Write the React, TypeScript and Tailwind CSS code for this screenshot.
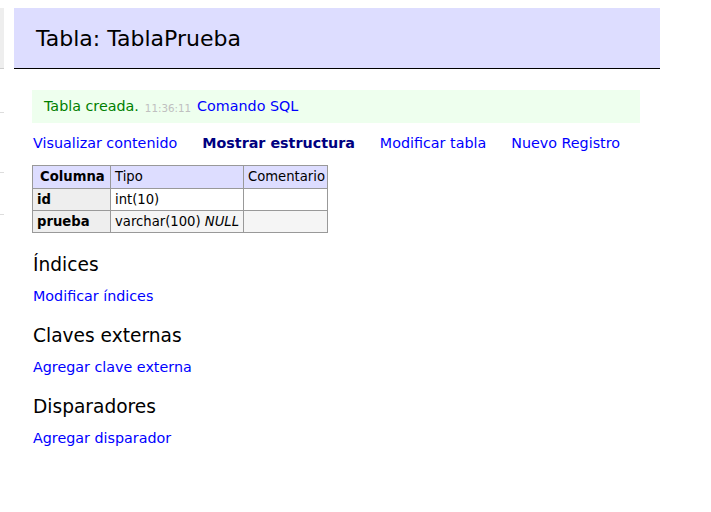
import React from 'react';

const links = [
  { label: 'Visualizar contenido', active: false },
  { label: 'Mostrar estructura', active: true },
  { label: 'Modificar tabla', active: false },
  { label: 'Nuevo Registro', active: false },
];

const sections = [
  { title: 'Índices', link: 'Modificar índices' },
  { title: 'Claves externas', link: 'Agregar clave externa' },
  { title: 'Disparadores', link: 'Agregar disparador' },
];

export default function App() {
  return (
    <div className="flex min-h-[512px] bg-white text-[14.3px] text-black" style={{ fontFamily: '"DejaVu Sans", Verdana, sans-serif' }}>
      {/* left menu, cut off */}
      <div className="w-[4px] shrink-0 flex flex-col">
        <div className="mt-[8px] h-[61px] bg-[#eee] border-b border-[#ccc]" />
        <div className="mt-[43px] border-b border-[#ddd]" />
        <div className="mt-[59px] border-b border-[#ddd]" />
        <div className="mt-[41px] border-b border-[#ddd]" />
      </div>

      <div className="ml-[10px] w-[646px] flex flex-col">
        <h2 className="mt-[8px] h-[61px] bg-[#ddf] border-b border-black pl-[22px] flex items-center text-[22px] leading-none pt-[2px]">
          Tabla: TablaPrueba
        </h2>

        <div className="ml-[18px] mr-[20px] mt-[21px] h-[33px] bg-[#efe] pl-[12px] flex items-center gap-[6px] pt-[1px]">
          <span className="text-[#008000]">Tabla creada.</span>
          <span className="text-[#c0c0c0] text-[10.3px] mt-[3px]">11:36:11</span>
          <span className="text-[#00f]">Comando SQL</span>
        </div>

        <div className="ml-[19px] mt-[12px] flex gap-[25px] leading-[17px]">
          {links.map((l) => (
            <span key={l.label} className={l.active ? 'font-bold text-[#000080]' : 'text-[#00f]'}>
              {l.label}
            </span>
          ))}
        </div>

        <table className="ml-[18px] mt-[13px] border-collapse table-fixed w-[295px] text-[13.2px] leading-[16px]">
          <colgroup>
            <col className="w-[78px]" />
            <col className="w-[133px]" />
            <col className="w-[84px]" />
          </colgroup>
          <thead>
            <tr className="bg-[#ddf]">
              <th className="border border-[#999] pl-[7px] pr-[2px] h-[23px] text-left font-bold whitespace-nowrap">Columna</th>
              <th className="border border-[#999] px-[4px] text-left font-normal">Tipo</th>
              <th className="border border-[#999] px-[4px] text-left font-normal whitespace-nowrap">Comentario</th>
            </tr>
          </thead>
          <tbody>
            <tr>
              <th className="border border-[#999] bg-[#eee] px-[4px] h-[22px] text-left font-bold">id</th>
              <td className="border border-[#999] px-[4px]">int(10)</td>
              <td className="border border-[#999] px-[4px]"></td>
            </tr>
            <tr className="bg-[#f5f5f5]">
              <th className="border border-[#999] bg-[#eee] px-[4px] h-[22px] text-left font-bold">prueba</th>
              <td className="border border-[#999] px-[4px] whitespace-nowrap">
                varchar(100) <i>NULL</i>
              </td>
              <td className="border border-[#999] px-[4px]"></td>
            </tr>
          </tbody>
        </table>

        <div className="ml-[19px] flex flex-col">
          {sections.map((s, i) => (
            <div key={s.title} className={i === 0 ? 'mt-[21px]' : 'mt-[20px]'}>
              <h3 className="text-[18.6px] leading-[22px]">{s.title}</h3>
              <p className="mt-[12px] text-[#00f] leading-[17px]">{s.link}</p>
            </div>
          ))}
        </div>
      </div>
    </div>
  );
}
